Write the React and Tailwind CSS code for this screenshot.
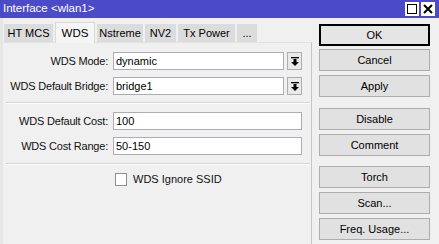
import React from 'react';

const font = { fontFamily: '"Liberation Sans", Arial, sans-serif' };

function DropIcon() {
  return (
    <svg width="8" height="9" viewBox="0 0 8 9" className="block">
      <rect x="0" y="0" width="8" height="1.3" fill="#000" />
      <rect x="2.5" y="2" width="3" height="3" fill="#000" />
      <polygon points="0,5 8,5 4,9" fill="#000" />
    </svg>
  );
}

function Field({ label, value, drop }) {
  return (
    <div className="flex items-center h-[18px]">
      <div className="w-[104px] whitespace-nowrap text-right pr-[1px] text-[11px] tracking-[-0.2px] text-[#111]">{label}</div>
      <div
        className={`ml-[4px] h-[18px] border border-[#abadb3] bg-white flex items-center pl-[2px] text-[11px] text-black ${
          drop ? 'w-[171px]' : 'w-[189px]'
        }`}
      >
        {value}
      </div>
      {drop && (
        <div className="ml-[3px] w-[15px] h-[18px] border border-[#adadad] bg-[#e9e9e9] flex items-center justify-center">
          <DropIcon />
        </div>
      )}
    </div>
  );
}

function Btn({ children, primary, className = '' }) {
  return (
    <div
      className={`w-[111px] h-[22px] flex items-center justify-center text-[11px] text-black bg-[#e1e1e1] ${
        primary ? 'border-2 border-black bg-[#e5e5e5]' : 'border border-[#adadad]'
      } ${className}`}
    >
      {children}
    </div>
  );
}

function Separator() {
  return <div className="ml-[3px] h-[2px] border-t border-[#d5d5d5] border-b border-b-white" />;
}

const tabs = [
  { t: 'HT MCS', w: 'w-[49px]' },
  { t: 'WDS', w: 'w-[40px]', active: true },
  { t: 'Nstreme', w: 'w-[46px]' },
  { t: 'NV2', w: 'w-[31px]' },
  { t: 'Tx Power', w: 'w-[57px]' },
  { t: '...', w: 'w-[20px]' },
];

export default function App() {
  return (
    <div className="w-[439px] h-[244px] bg-[#f0f0f0] overflow-hidden flex flex-col" style={font}>
      {/* Title bar */}
      <div className="h-[18px] bg-[#4b4bc8] flex items-center justify-between pl-[3px] pr-[4px]">
        <span className="text-white text-[11.5px] leading-none">Interface &lt;wlan1&gt;</span>
        <div className="flex gap-[2px]">
          <div className="w-[14px] h-[14px] bg-white flex items-center justify-center">
            <div className="w-[10px] h-[10px] border-[1.5px] border-black" />
          </div>
          <div className="w-[14px] h-[14px] bg-white flex items-center justify-center">
            <svg width="10" height="10" viewBox="0 0 10 10">
              <path d="M1 1 L9 9 M9 1 L1 9" stroke="#000" strokeWidth="2" />
            </svg>
          </div>
        </div>
      </div>

      <div className="flex flex-1">
        {/* Left side: tabs + panel */}
        <div className="w-[312px] flex flex-col border-l-[3px] border-l-[#e6e6e6]">
          <div className="h-[24px] flex items-end gap-[2px] pl-[1px]">
            {tabs.map(({ t, w, active }) =>
              active ? (
                <div
                  key={t}
                  className={`${w} h-[21px] -mb-px bg-[#f5f5f5] border border-b-0 border-[#d9d9d9] flex justify-center pt-[2px] text-[11.5px] text-black relative z-10`}
                >
                  {t}
                </div>
              ) : (
                <div
                  key={t}
                  className={`${w} h-[18px] bg-[#dcdcdc] flex items-center justify-center text-[11px] text-black`}
                >
                  {t}
                </div>
              )
            )}
          </div>
          <div className="flex-1 border-t border-t-[#e2e2e2] border-r border-r-[#c4c4c4] pt-[9px] pr-[1px]">
            <div className="flex flex-col gap-[7px] pl-[2px]">
              <Field label="WDS Mode:" value="dynamic" drop />
              <Field label="WDS Default Bridge:" value="bridge1" drop />
            </div>
            <div className="mt-[7px]">
              <Separator />
            </div>
            <div className="mt-[8px] flex flex-col gap-[7px] pl-[2px]">
              <Field label="WDS Default Cost:" value="100" />
              <Field label="WDS Cost Range:" value="50-150" />
            </div>
            <div className="mt-[8px]">
              <Separator />
            </div>
            <div className="mt-[6px] flex items-center pl-[112px]">
              <div className="w-[12px] h-[13px] border border-[#8f8f8f] bg-white" />
              <span className="ml-[6px] text-[11px] text-[#111]">WDS Ignore SSID</span>
            </div>
          </div>
        </div>

        {/* Right side: buttons */}
        <div className="flex flex-col pl-[7px] pt-[6px]">
          <Btn primary>OK</Btn>
          <Btn className="mt-[3px]">Cancel</Btn>
          <Btn className="mt-[4px]">Apply</Btn>
          <Btn className="mt-[11px]">Disable</Btn>
          <Btn className="mt-[4px]">Comment</Btn>
          <Btn className="mt-[10px]">Torch</Btn>
          <Btn className="mt-[4px]">Scan...</Btn>
          <Btn className="mt-[4px]">Freq. Usage...</Btn>
        </div>
      </div>
    </div>
  );
}
